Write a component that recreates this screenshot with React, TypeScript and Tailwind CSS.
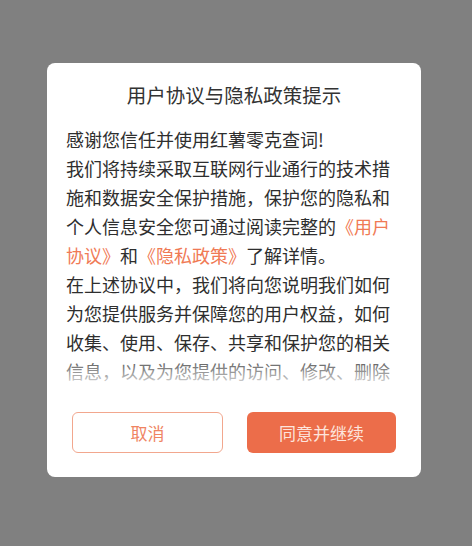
import React from 'react'

const font = {
  fontFamily: '"Noto Sans CJK SC", "Noto Sans", sans-serif',
}

// 协议弹窗
export default function App() {
  return (
    <div
      className="w-[472px] h-[546px] bg-[#808080] flex justify-start items-start pt-[63px] pl-[47px]"
      style={font}
    >
      <div className="w-[374px] bg-white rounded-[8px] flex flex-col pt-[20px] pb-[23.5px]">
        <h1 className="text-center text-[19.5px] leading-[24px] text-[#333333] font-normal">
          用户协议与隐私政策提示
        </h1>

        <div className="relative mt-[17.5px] h-[266px] overflow-hidden px-[19px]">
          <div className="text-[18px] leading-[29px] text-[#2e2e2e]">
            <p>感谢您信任并使用红薯零克查词!</p>
            <p>
              我们将持续采取互联网行业通行的技术措施和数据安全保护措施，保护您的隐私和个人信息安全您可通过阅读完整的
              <span className="text-[#f07a55]">《用户协议》</span>和
              <span className="text-[#f07a55]">《隐私政策》</span>了解详情。
            </p>
            <p>
              在上述协议中，我们将向您说明我们如何为您提供服务并保障您的用户权益，如何收集、使用、保存、共享和保护您的相关信息，以及为您提供的访问、修改、删除和保护您个人信息的方式。
            </p>
          </div>
          {/* 底部渐隐 */}
          <div className="absolute left-0 right-0 bottom-0 h-[38px] bg-gradient-to-b from-white/0 to-white" />
        </div>

        <div className="flex gap-[24px] px-[25px] mt-[21.5px]">
          <button className="flex-1 h-[41px] rounded-[6px] border border-[#f2a78e] text-[#ef8462] text-[17px] bg-white">
            取消
          </button>
          <button className="flex-1 h-[41px] rounded-[6px] bg-[#ec6d4a] text-[#fde4dc] text-[17px]">
            同意并继续
          </button>
        </div>
      </div>
    </div>
  )
}
